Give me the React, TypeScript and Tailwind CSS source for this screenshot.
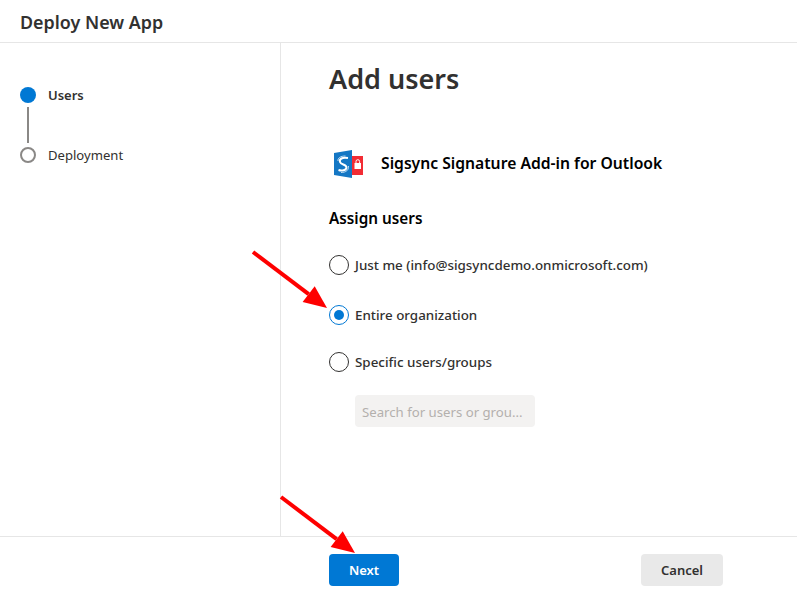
import React from "react";

const font = "font-['Noto_Sans','Open_Sans',sans-serif]";

const Radio = ({ label, checked }: { label: string; checked?: boolean }) => (
  <div className="flex items-center gap-[6px] h-5">
    <span
      className={`flex items-center justify-center w-5 h-5 rounded-full border bg-white ${
        checked ? "border-[#0078d4]" : "border-[#323130]"
      }`}
    >
      {checked && <span className="w-[10px] h-[10px] rounded-full bg-[#0078d4]" />}
    </span>
    <span className="text-[13.4px] font-medium text-[#323130]">{label}</span>
  </div>
);

const Logo = () => (
  <svg width="32" height="30" viewBox="0 0 32 30">
    <polygon points="1,4 19,1 19,29 1,26" fill="#1477c4" />
    <rect x="19" y="7" width="11" height="19" fill="#f22c34" />
    <path d="M15 9 C9 8 6 10 7 13 C8 16 13.5 15 13.5 18.5 C13.5 21.5 8.5 22 5.5 21" fill="none" stroke="#fff" strokeWidth="2" />
    <path d="M12.5 7 C7.5 7 4.5 9 5 12" fill="none" stroke="#cfe6f7" strokeWidth="0.9" />
    <path d="M15.5 17 C16 21 13 23.5 8 23.5" fill="none" stroke="#cfe6f7" strokeWidth="0.9" />
    <rect x="21.5" y="14" width="6.5" height="6" fill="#fff" />
    <path d="M23 14 V12.5 a1.8 1.8 0 0 1 3.6 0 V14" fill="none" stroke="#fff" strokeWidth="1" />
  </svg>
);

const Arrow = ({ x1, y1, x2, y2 }: { x1: number; y1: number; x2: number; y2: number }) => {
  const a = Math.atan2(y2 - y1, x2 - x1);
  const len = 23;
  const w = 10;
  const bx = x2 - len * Math.cos(a);
  const by = y2 - len * Math.sin(a);
  const nx = -Math.sin(a) * w;
  const ny = Math.cos(a) * w;
  return (
    <g>
      <line x1={x1} y1={y1} x2={bx} y2={by} stroke="#fe0000" strokeWidth="4" />
      <polygon points={`${x2},${y2} ${bx + nx},${by + ny} ${bx - nx},${by - ny}`} fill="#fe0000" />
    </g>
  );
};

export default function App() {
  return (
    <div className={`relative w-[797px] h-[594px] overflow-hidden bg-white flex flex-col ${font}`}>
      <div className="h-[43px] shrink-0 border-b border-[#e6e6e6] pl-5 pt-[10px]">
        <h1 className="text-[17.9px] leading-6 font-semibold text-[#323130]">Deploy New App</h1>
      </div>

      <div className="flex flex-1 min-h-0">
        <div className="w-[281px] shrink-0 border-r border-[#e6e6e6] pl-5 pt-[44px]">
          <div className="flex items-center gap-3 h-4">
            <span className="w-4 h-4 rounded-full bg-[#0078d4]" />
            <span className="text-[13px] font-semibold text-[#323130] pt-[2px]">Users</span>
          </div>
          <div className="ml-[7px] mt-1 w-[2px] h-9 bg-[#8a8886]" />
          <div className="flex items-center gap-3 h-4 mt-1">
            <span className="w-4 h-4 rounded-full border-2 border-[#8a8886]" />
            <span className="text-[13.1px] text-[#323130] pt-[2px]">Deployment</span>
          </div>
        </div>

        <div className="flex-1 pl-12 pt-[16px]">
          <h2 className="text-[27px] leading-[40px] font-semibold text-[#323130]">Add users</h2>
          <div className="flex items-center gap-4 mt-[50px] pl-1 h-[30px]">
            <Logo />
            <span className="text-[15.7px] font-semibold text-black">Sigsync Signature Add-in for Outlook</span>
          </div>
          <h3 className="mt-[29px] text-[15.3px] leading-5 font-semibold text-black">Assign users</h3>
          <div className="mt-[27px]">
            <Radio label="Just me (info@sigsyncdemo.onmicrosoft.com)" />
          </div>
          <div className="mt-[30px]">
            <Radio label="Entire organization" checked />
          </div>
          <div className="mt-[27px]">
            <Radio label="Specific users/groups" />
          </div>
          <div className="ml-[26px] mt-[23px] w-[180px] h-8 bg-[#f3f2f1] rounded-sm flex items-center pl-[7px] pt-1 text-[13.2px] text-[#b3b0ad]">
            Search for users or grou...
          </div>
        </div>
      </div>

      <div className="h-[58px] shrink-0 border-t border-[#e6e6e6] pl-[329px] pt-[17px] flex items-start">
        <button className="w-[70px] h-8 rounded-sm bg-[#0078d4] text-white text-[13px] font-semibold pt-[2px]">Next</button>
        <button className="ml-[242px] w-[82px] h-8 rounded-sm bg-[#e9e9e9] text-[#323130] text-[13px] font-semibold pt-[2px]">Cancel</button>
      </div>

      <svg className="absolute inset-0 pointer-events-none" width="797" height="594">
        <Arrow x1={253} y1={252} x2={327} y2={308} />
        <Arrow x1={281} y1={497} x2={355} y2={553} />
      </svg>
    </div>
  );
}
